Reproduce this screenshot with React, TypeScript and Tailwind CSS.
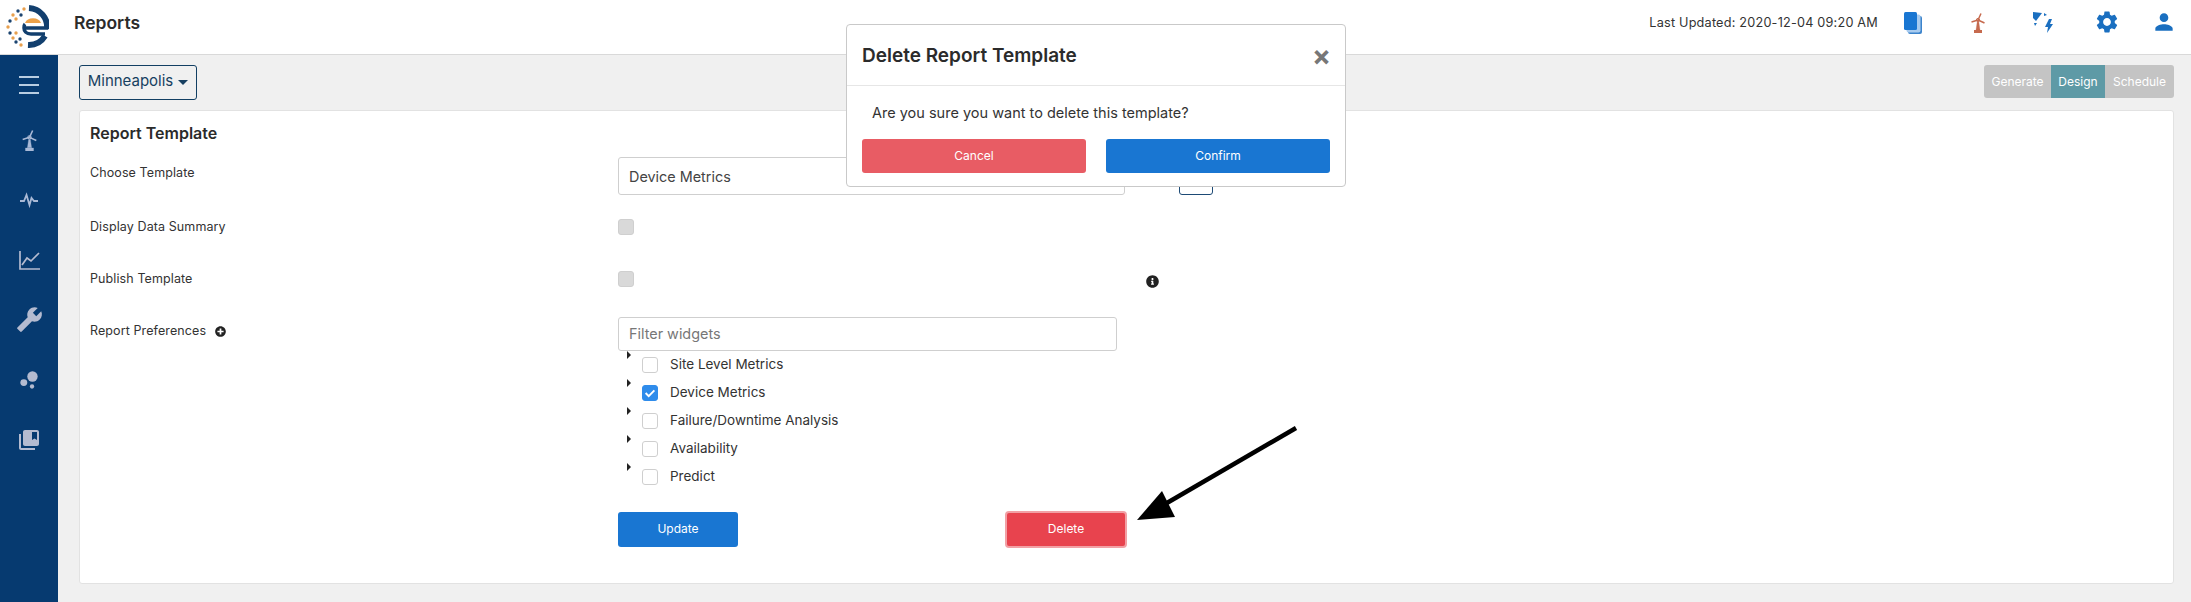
import { FaInfoCircle, FaPlusCircle } from 'react-icons/fa';
import { MdBubbleChart, MdBuild, MdCollectionsBookmark, MdPerson, MdSettings } from 'react-icons/md';

function Logo() {
  const dots = [
    [19, 5, '#e8a04e'], [13, 7, '#1c4470'], [8, 11, '#e8a04e'], [5, 17, '#1c4470'], [3, 23, '#e8a04e'],
    [5, 29, '#1c4470'], [8, 34, '#e8a04e'], [11, 38, '#1c4470'], [16, 41, '#e8a04e'], [15, 35, '#1c4470'], [11, 29, '#e8a04e'], [11, 15, '#e8a04e'], [16, 11, '#1c4470'],
  ] as const;
  return (
    <svg width="44" height="46" viewBox="0 0 44 46" className="ml-[5px] mt-[4px] shrink-0">
      {dots.map(([cx, cy, fill], i) => <circle key={i} cx={cx} cy={cy} r="1.7" fill={fill} />)}
      <path d="M24 4 A19 19 0 0 1 42 25 M23 41 A19 19 0 0 0 40 32" fill="none" stroke="#123f6e" strokeWidth="6" />
      <path d="M20 19 A8.5 7 0 0 1 36 19 Z" fill="#eca24a" />
      <path d="M19 24 H43 M40 30 H26 C21 30 19 27 19 24 C19 22 19 21 20 20" fill="none" stroke="#123f6e" strokeWidth="3.5" />
    </svg>
  );
}

function Turbine({ className }: { className: string }) {
  return (
    <svg viewBox="0 0 14 20" className={className} fill="currentColor" stroke="currentColor">
      <path d="M6.2 9 H7.8 L9 17 H5 Z" strokeWidth="0.3" />
      <rect x="3" y="17" width="8" height="3" strokeWidth="0" />
      <path d="M7 7 L10 0.5 M7 7 L0.5 9 M7 7 L13.5 10" strokeWidth="1.5" />
      <circle cx="7" cy="7" r="1.6" fill="none" strokeWidth="1" />
    </svg>
  );
}

function Side() {
  const icon = 'w-[24px] h-[24px] text-[#b4bbd0]';
  return (
    <aside className="w-[58px] shrink-0 bg-[#063a70] flex flex-col items-center">
      <div className="mt-[21px] flex flex-col gap-[6px] w-[20px]">
        <div className="h-[2px] bg-[#b8cde2]" />
        <div className="h-[2px] bg-[#b8cde2]" />
        <div className="h-[2px] bg-[#b8cde2]" />
      </div>
      <Turbine className="w-[15px] h-[21px] text-[#a9b9d6] mt-[36px]" />
      <svg viewBox="0 0 24 24" className="w-[24px] h-[24px] text-[#a9b9d6] mt-[37px]" fill="none" stroke="currentColor" strokeWidth="1.8">
        <path d="M3 13 H7 L9.5 7 L12.5 17 L14.5 10 L17 13 H21" />
      </svg>
      <svg viewBox="0 0 24 24" className={`${icon} mt-[36px]`} fill="none" stroke="currentColor" strokeWidth="1.7">
        <path d="M3 3 V21 H23" />
        <path d="M5 17 L10 10 L14 13 L22 5" />
      </svg>
      <MdBuild className="w-[27px] h-[27px] text-[#b4bbd0] mt-[34px] -scale-x-100" />
      <MdBubbleChart className="w-[26px] h-[26px] text-[#b4bbd0] mt-[34px]" />
      <MdCollectionsBookmark className="w-[24px] h-[24px] text-[#b4bbd0] mt-[35px]" />
    </aside>
  );
}

function Header() {
  return (
    <header className="h-[55px] bg-white border-b border-[#d9d9d9] flex items-start shrink-0">
      <Logo />
      <div className="ml-[25px] mt-[11px] text-[17.5px] leading-[24px] font-semibold text-[#2b2b2b]">Reports</div>
      <div className="ml-auto mt-[13px] text-[12.7px] leading-[19px] text-[#333] tracking-[0.2px]">Last Updated: 2020-12-04 09:20 AM</div>
      <svg viewBox="0 0 18 22" className="w-[18px] h-[22px] ml-[26px] mt-[12px]">
        <rect x="4" y="4" width="14" height="18" rx="2" fill="#3c84cc" />
        <rect x="2.5" y="2.5" width="14" height="18" rx="2" fill="#a8cbef" />
        <rect x="0" y="0" width="13" height="18" rx="1.5" fill="#1976d2" />
      </svg>
      <Turbine className="w-[14px] h-[20px] ml-[49px] mt-[13px] text-[#c66a4e]" />
      <svg viewBox="0 0 24 24" className="w-[24px] h-[24px] ml-[46px] mt-[10px]" fill="#1a6fc0">
        <path d="M2 2 L11 3 L5 11 L2 8 Z" />
        <path d="M13 3 L16 5 L13 6 Z" />
        <path d="M3 13 L6 13 L4 16 Z" />
        <path d="M18 9 L14 17 H17 L16 23 L22 14 H19 L21 9 Z" />
      </svg>
      <MdSettings className="w-[26px] h-[26px] ml-[39px] mt-[9px] text-[#1a6fc0]" />
      <MdPerson className="w-[26px] h-[26px] ml-[31px] mr-[14px] mt-[9px] text-[#1a6fc0]" />
    </header>
  );
}

function Row({ label, extra, className, children }: { label: string; extra?: React.ReactNode; className: string; children?: React.ReactNode }) {
  return (
    <div className={`flex ${className}`}>
      <div className="w-[528px] shrink-0 text-[12.5px] text-[#333] tracking-[0.1px] flex items-start gap-[9px]">
        {label}
        {extra}
      </div>
      {children}
    </div>
  );
}

function TreeRow({ label, checked }: { label: string; checked?: boolean }) {
  return (
    <div className="h-[28px] flex items-center relative">
      <span className="absolute left-[9px] top-[0px] border-y-[4px] border-y-transparent border-l-[4.5px] border-l-[#222]" />
      <span className={`ml-[24px] w-[16px] h-[16px] rounded-[3px] border flex items-center justify-center ${checked ? 'bg-[#2f8ceb] border-[#2f8ceb]' : 'bg-white border-[#cfcfcf]'}`}>
        {checked && (
          <svg viewBox="0 0 16 16" className="w-[14px] h-[14px]" fill="none" stroke="#fff" strokeWidth="2.2">
            <path d="M3 8 L6.5 11.5 L13 5" />
          </svg>
        )}
      </span>
      <span className="ml-[12px] text-[13.5px] text-[#333]">{label}</span>
    </div>
  );
}

function Form() {
  return (
    <section className="mt-[10px] h-[474px] bg-white border border-[#e2e2e2] rounded-[3px] pl-[10px] pt-[11px] relative">
      <h2 className="text-[16px] font-semibold text-[#2b2b2b] leading-[22px]">Report Template</h2>
      <Row label="Choose Template" className="mt-[20px]">
        <div className="-mt-[7px] w-[507px] h-[38px] border border-[#cfcfcf] rounded-[3px] flex items-center px-[10px] pt-[1px] text-[14.4px] text-[#444]">Device Metrics</div>
        <div className="ml-[54px] -mt-[7px] w-[34px] h-[38px] border border-[#1d4a75] rounded-[3px]" />
      </Row>
      <Row label="Display Data Summary" className="mt-[23px]">
        <span className="w-[16px] h-[16px] rounded-[3px] bg-[#d9d9d9] border border-[#cfcfcf] mt-[1px]" />
      </Row>
      <Row label="Publish Template" className="mt-[33px]">
        <span className="w-[16px] h-[16px] rounded-[3px] bg-[#d9d9d9] border border-[#cfcfcf] mt-[1px]" />
        <FaInfoCircle className="w-[13px] h-[13px] text-[#222] ml-[512px] mt-[5px]" />
      </Row>
      <Row label="Report Preferences" extra={<FaPlusCircle className="w-[11px] h-[11px] mt-[4px] text-[#222]" />} className="mt-[33px]">
        <div className="flex flex-col w-[499px]">
          <div className="-mt-[5px] h-[34px] border border-[#cfcfcf] rounded-[3px] flex items-center px-[10px] pt-[1px] text-[14.4px] text-[#777]">Filter widgets</div>
          <TreeRow label="Site Level Metrics" />
          <TreeRow label="Device Metrics" checked />
          <TreeRow label="Failure/Downtime Analysis" />
          <TreeRow label="Availability" />
          <TreeRow label="Predict" />
          <div className="flex items-center mt-[20px] w-[509px]">
            <button className="w-[120px] h-[35px] rounded-[3px] bg-[#1976d2] text-white text-[12px]">Update</button>
            <button className="ml-auto w-[122px] h-[37px] rounded-[4px] bg-[#e8434e] border-2 border-[#f2a0a5] text-white text-[12px]">Delete</button>
          </div>
        </div>
      </Row>
    </section>
  );
}

function Modal() {
  return (
    <div className="absolute left-[846px] top-[24px] w-[500px] h-[163px] bg-white border border-[#c9c9c9] rounded-[4px]">
      <div className="h-[61px] border-b border-[#e6e6e6] flex items-center px-[15px]">
        <h3 className="text-[19px] font-semibold text-[#2b2b2b] mt-[2px]">Delete Report Template</h3>
        <span className="ml-auto text-[#777] text-[28px] font-bold leading-none mt-[1px] -mr-[1px]">×</span>
      </div>
      <p className="ml-[25px] mt-[17px] text-[14.5px] leading-[20px] text-[#333]">Are you sure you want to delete this template?</p>
      <div className="flex gap-[20px] px-[15px] mt-[16px]">
        <button className="flex-1 h-[34px] pb-[1px] rounded-[3px] bg-[#e85c64] text-white text-[12px]">Cancel</button>
        <button className="flex-1 h-[34px] pb-[1px] rounded-[3px] bg-[#1976d2] text-white text-[12px]">Confirm</button>
      </div>
    </div>
  );
}

export default function App() {
  return (
    <div className="w-[2191px] h-[602px] relative overflow-hidden bg-[#f0f0f0] flex flex-col font-['Inter',sans-serif]">
      <Header />
      <div className="flex flex-1 min-h-0">
        <Side />
        <main className="flex-1 pl-[21px] pr-[17px] pt-[10px]">
          <div className="flex items-start justify-between">
            <button className="h-[35px] w-[118px] border border-[#123f63] rounded-[3px] text-[#163f60] text-[15px] leading-[30px] pb-[3px] flex items-center justify-center gap-[5px]">
              Minneapolis
              <span className="border-x-[5px] border-x-transparent border-t-[5px] border-t-[#163f60] mt-[3px]" />
            </button>
            <div className="flex h-[33px] rounded-[3px] overflow-hidden text-white text-[12px]">
              <span className="w-[67px] bg-[#c4c4c4] flex items-center justify-center">Generate</span>
              <span className="w-[54px] bg-[#5e9aa6] flex items-center justify-center">Design</span>
              <span className="w-[69px] bg-[#c4c4c4] flex items-center justify-center">Schedule</span>
            </div>
          </div>
          <Form />
        </main>
      </div>
      <Modal />
      <svg className="absolute left-[1130px] top-[420px]" width="175" height="110" viewBox="0 0 175 110">
        <path d="M166 8 L30 87" stroke="#000" strokeWidth="4.5" />
        <path d="M7 100 L32 71 L45 97 Z" fill="#000" />
      </svg>
    </div>
  );
}
